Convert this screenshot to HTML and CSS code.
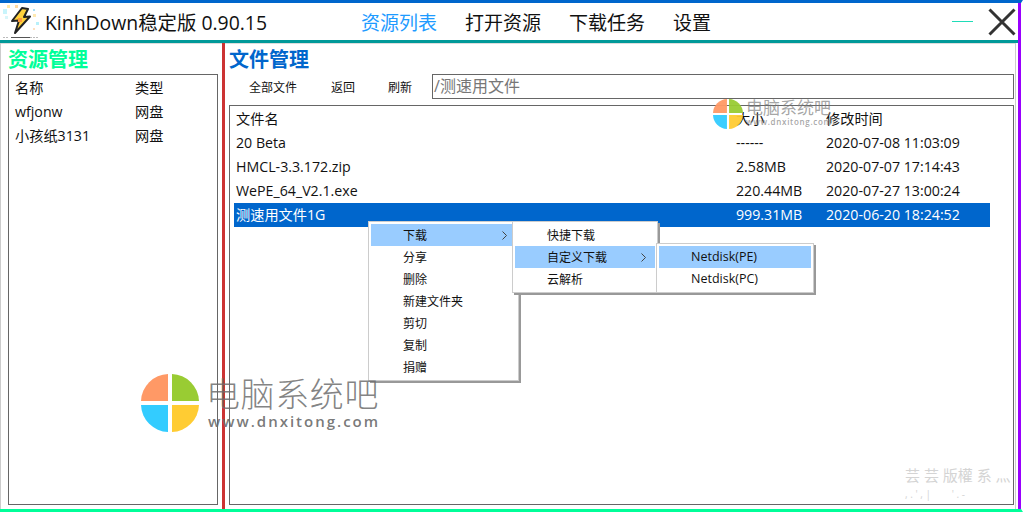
FILE: index.html
```html
<!DOCTYPE html>
<html>
  <head>
    <title>KinhDown</title>
    <meta charset="UTF-8">
    <link rel="stylesheet" href="styles.css">
  </head>
  <body>
    <div class="window">
      <header class="topbar">
        <svg class="logo" width="40" height="37" viewBox="0 3 40 37">
          <rect x="3" y="9" width="4" height="5" fill="#c8f4fb"/>
          <rect x="7" y="5" width="3" height="3" fill="#ffe9a8"/>
          <rect x="15" y="5" width="3" height="3" fill="#ffd9a0"/>
          <rect x="5" y="16" width="3" height="3" fill="#d8f6fa"/>
          <rect x="33" y="9" width="2" height="2" fill="#a8e0f5"/>
          <rect x="33" y="14" width="3" height="3" fill="#ffe9b0"/>
          <rect x="36" y="22" width="3" height="3" fill="#b8f0fa"/>
          <rect x="33" y="28" width="2" height="2" fill="#ffe0c0"/>
          <path d="M22 8 L12 21 L19 20.5 L15 33 L30 16.5 L24 17 L28 9 Z" fill="#ffd23c" stroke="#222" stroke-width="2" stroke-linejoin="round"/>
          <rect x="18" y="18" width="4" height="4" fill="#ff9a3c"/>
          <path d="M3 37.5 H9 M30 37.5 H38" stroke="#bbb" stroke-width="1" stroke-dasharray="2 1"/>
          <path d="M11 37.5 H30" stroke="#555" stroke-width="1"/>
        </svg>
        <div class="app-name">KinhDown稳定版 0.90.15</div>
        <nav class="nav">
          <span class="nav-item active">资源列表</span>
          <span class="nav-item">打开资源</span>
          <span class="nav-item">下载任务</span>
          <span class="nav-item">设置</span>
        </nav>
        <div class="minimize"></div>
        <svg class="close" width="28" height="28" viewBox="0 0 28 28">
          <path d="M1.5 1.5 L26.5 26.5 M26.5 1.5 L1.5 26.5" stroke="#333" stroke-width="3" fill="none"/>
        </svg>
      </header>
      <main class="content">
        <section class="side">
          <h2 class="side-title">资源管理</h2>
          <div class="box side-box">
            <div class="side-row"><span class="side-name">名称</span><span>类型</span></div>
            <div class="side-row"><span class="side-name">wfjonw</span><span>网盘</span></div>
            <div class="side-row"><span class="side-name">小孩纸3131</span><span>网盘</span></div>
          </div>
        </section>
        <section class="files">
          <h2 class="files-title">文件管理</h2>
          <div class="toolbar">
            <span class="tool tool-all">全部文件</span>
            <span class="tool tool-back">返回</span>
            <span class="tool tool-refresh">刷新</span>
            <div class="path">/测速用文件</div>
          </div>
          <div class="box file-box">
            <div class="file-row"><span class="col-name">文件名</span><span class="col-size">大小</span><span>修改时间</span></div>
            <div class="file-row"><span class="col-name">20 Beta</span><span class="col-size">------</span><span>2020-07-08 11:03:09</span></div>
            <div class="file-row"><span class="col-name">HMCL-3.3.172.zip</span><span class="col-size">2.58MB</span><span>2020-07-07 17:14:43</span></div>
            <div class="file-row"><span class="col-name">WePE_64_V2.1.exe</span><span class="col-size">220.44MB</span><span>2020-07-27 13:00:24</span></div>
            <div class="file-row selected"><span class="col-name">测速用文件1G</span><span class="col-size">999.31MB</span><span>2020-06-20 18:24:52</span></div>
          </div>
        </section>
      </main>

      <div class="menu menu-main">
        <div class="menu-item hot">下载<svg class="arrow" width="5" height="9" viewBox="0 0 5 9"><path d="M0.5 0.5 L4.5 4.5 L0.5 8.5" fill="none" stroke="#444" stroke-width="1"/></svg></div>
        <div class="menu-item">分享</div>
        <div class="menu-item">删除</div>
        <div class="menu-item">新建文件夹</div>
        <div class="menu-item">剪切</div>
        <div class="menu-item">复制</div>
        <div class="menu-item">捐赠</div>
      </div>
      <div class="menu menu-sub">
        <div class="menu-item">快捷下载</div>
        <div class="menu-item hot">自定义下载<svg class="arrow" width="5" height="9" viewBox="0 0 5 9"><path d="M0.5 0.5 L4.5 4.5 L0.5 8.5" fill="none" stroke="#444" stroke-width="1"/></svg></div>
        <div class="menu-item">云解析</div>
      </div>
      <div class="menu menu-disk">
        <div class="menu-item hot">Netdisk(PE)</div>
        <div class="menu-item">Netdisk(PC)</div>
      </div>

      <div class="mark mark-top">
        <svg width="30" height="30" viewBox="0 0 58 58">
          <path d="M27 27 V0 A28 28 0 0 0 0 27 Z" fill="#ff9966"/>
          <path d="M31 27 V0 A28 28 0 0 1 58 27 Z" fill="#99cc33"/>
          <path d="M27 31 H0 A28 28 0 0 0 27 58 Z" fill="#33ccff"/>
          <path d="M31 31 H58 A28 28 0 0 1 31 58 Z" fill="#ffcc33"/>
        </svg>
        <div class="mark-text">
          <div class="mark-cn-small">电脑系统吧</div>
          <div class="mark-url-small">www.dnxitong.com</div>
        </div>
      </div>
      <div class="mark mark-big">
        <svg width="58" height="58" viewBox="0 0 58 58">
          <path d="M27 27 V0 A28 28 0 0 0 0 27 Z" fill="#ff9966"/>
          <path d="M31 27 V0 A28 28 0 0 1 58 27 Z" fill="#99cc33"/>
          <path d="M27 31 H0 A28 28 0 0 0 27 58 Z" fill="#33ccff"/>
          <path d="M31 31 H58 A28 28 0 0 1 31 58 Z" fill="#ffcc33"/>
        </svg>
        <div class="mark-text">
          <div class="mark-cn">电脑系统吧</div>
          <div class="mark-url">www.dnxitong.com</div>
        </div>
      </div>
      <div class="faint">芸 芸 版權 系 灬
        <div class="faint-small">, . ' , |        ' . -</div>
      </div>
    </div>
  </body>
</html>
```

FILE: styles.css
```css
html, body {
  margin: 0;
  height: 100%;
  overflow: hidden;
  background: #fff;
}
.window {
  position: relative;
  box-sizing: border-box;
  width: 1023px;
  height: 512px;
  display: flex;
  flex-direction: column;
  font-family: "Open Sans", "Noto Sans CJK SC", sans-serif;
  color: #111;
  background: #fff;
  border-top: 3px solid #0066cc;
  border-bottom: 3px solid #00ff99;
  border-right: 2px solid #fff;
  box-shadow: inset -3px 0 0 #9900ff;
}
.topbar {
  height: 37px;
  flex: none;
  display: flex;
  align-items: center;
  border-bottom: 3px solid #009999;
  margin-right: 3px;
}
.logo {
  flex: none;
}
.app-name {
  margin-left: 5px;
  width: 316px;
  font-size: 19.4px;
  white-space: nowrap;
}
.nav {
  display: flex;
  gap: 28px;
  font-size: 19px;
}
.nav-item.active {
  color: #1e9bff;
}
.minimize {
  margin-left: auto;
  width: 21px;
  height: 1px;
  background: #1fdcb8;
  margin-right: 15px;
}
.close {
  margin-right: 2px;
}
.content {
  flex: 1;
  min-height: 0;
  display: flex;
  margin-right: 5px;
  border-left: 1px solid #ccc;
  border-right: 1px solid #ccc;
  box-shadow: inset 0 1px 0 #ddd;
}
.side {
  width: 221px;
  flex: none;
  display: flex;
  flex-direction: column;
  border-right: 3px solid #cc3333;
}
.side-title, .files-title {
  margin: 0;
  height: 31px;
  line-height: 33px;
  font-size: 20px;
  font-weight: bold;
}
.side-title {
  padding-left: 7px;
  color: #00ff99;
}
.files-title {
  color: #0066cc;
}
.box {
  border: 1px solid #666;
  box-sizing: border-box;
}
.side-box {
  flex: 1;
  margin: 0 4px 4px 7px;
  padding-top: 1px;
  font-size: 14.2px;
}
.side-row {
  display: flex;
  height: 24px;
  line-height: 24px;
  padding-left: 6px;
}
.side-name {
  width: 120px;
}
.files {
  flex: 1;
  min-width: 0;
  display: flex;
  flex-direction: column;
  padding: 0 1px 4px 4px;
}
.toolbar {
  height: 25px;
  display: flex;
  align-items: center;
  font-size: 12px;
  margin-bottom: 6px;
}
.tool-all { margin-left: 20px; }
.tool-back { margin-left: 34px; }
.tool-refresh { margin-left: 33px; }
.path {
  box-sizing: border-box;
  margin-left: 20px;
  flex: 1;
  height: 25px;
  line-height: 23px;
  border: 1px solid #666;
  padding-left: 1px;
  font-size: 16px;
  color: #777;
}
.file-box {
  flex: 1;
  padding: 1px 23px 0 4px;
  font-size: 14.2px;
}
.file-row {
  display: flex;
  height: 24px;
  line-height: 24px;
  padding-left: 2px;
}
.col-name {
  width: 500px;
}
.col-size {
  width: 90px;
}
.selected {
  background: #0066cc;
  color: #fff;
}
.menu {
  position: absolute;
  box-sizing: border-box;
  background: #fff;
  border: 1px solid #ccc;
  padding: 2px;
  font-size: 12px;
  box-shadow: 2px 2px 0 #999;
}
.menu-main { left: 368px; top: 218px; width: 151px; }
.menu-sub { left: 512px; top: 218px; width: 146px; }
.menu-disk { left: 656px; top: 240px; width: 158px; font-size: 12.5px; }
.menu-item {
  position: relative;
  height: 22px;
  line-height: 23px;
  padding-left: 32px;
  white-space: nowrap;
}
.menu-disk .menu-item {
  line-height: 22px;
}
.hot {
  background: #99ccff;
}
.arrow {
  position: absolute;
  right: 9px;
  top: 7px;
}
.mark {
  position: absolute;
  display: flex;
  pointer-events: none;
}
.mark-top {
  left: 713px;
  top: 96px;
  gap: 3px;
  align-items: flex-start;
  opacity: 0.95;
}
.mark-big {
  left: 141px;
  top: 371px;
  gap: 7px;
  align-items: center;
}
.mark-cn {
  font-size: 34px;
  line-height: 36px;
  letter-spacing: 0.6px;
  color: rgba(110, 110, 110, 0.85);
  font-weight: 300;
}
.mark-url {
  margin-left: 2px;
  font-size: 15px;
  line-height: 18px;
  font-weight: 600;
  letter-spacing: 2px;
  color: rgba(105, 105, 105, 0.9);
}
.mark-cn-small {
  font-size: 17px;
  line-height: 18px;
  color: rgba(120, 120, 120, 0.7);
}
.mark-url-small {
  font-size: 8px;
  line-height: 10px;
  font-weight: 600;
  letter-spacing: 0.7px;
  color: rgba(120, 120, 120, 0.7);
}
.faint {
  position: absolute;
  left: 905px;
  top: 461px;
  font-size: 15px;
  line-height: 22px;
  color: #d4d4d4;
  white-space: nowrap;
}
.faint-small {
  font-size: 10px;
  line-height: 12px;
  padding-top: 2px;
  white-space: pre;
}
```
